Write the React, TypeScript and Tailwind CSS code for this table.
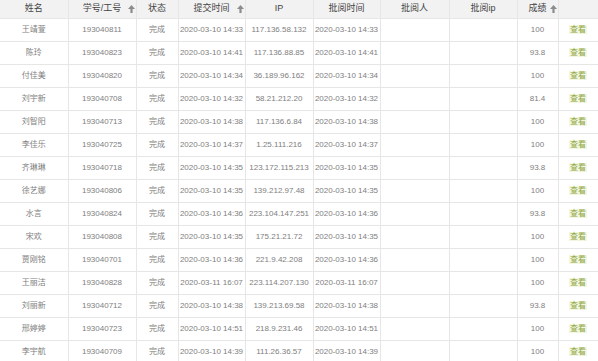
const rows = [
  ["王靖萱", "193040811", "2020-03-10 14:33", "117.136.58.132", "100"],
  ["陈玲", "193040823", "2020-03-10 14:41", "117.136.88.85", "93.8"],
  ["付佳美", "193040820", "2020-03-10 14:34", "36.189.96.162", "100"],
  ["刘宇新", "193040708", "2020-03-10 14:32", "58.21.212.20", "81.4"],
  ["刘智阳", "193040713", "2020-03-10 14:38", "117.136.6.84", "100"],
  ["李佳乐", "193040725", "2020-03-10 14:37", "1.25.111.216", "100"],
  ["齐琳琳", "193040718", "2020-03-10 14:35", "123.172.115.213", "93.8"],
  ["徐艺娜", "193040806", "2020-03-10 14:35", "139.212.97.48", "100"],
  ["水言", "193040824", "2020-03-10 14:36", "223.104.147.251", "93.8"],
  ["宋欢", "193040808", "2020-03-10 14:35", "175.21.21.72", "100"],
  ["贾刚铭", "193040701", "2020-03-10 14:36", "221.9.42.208", "100"],
  ["王丽洁", "193040828", "2020-03-11 16:07", "223.114.207.130", "100"],
  ["刘丽新", "193040712", "2020-03-10 14:38", "139.213.69.58", "93.8"],
  ["邢婷婷", "193040723", "2020-03-10 14:51", "218.9.231.46", "100"],
  ["李宇航", "193040709", "2020-03-10 14:39", "111.26.36.57", "100"],
];

// small up arrow next to sortable headers
const SortArrow = () => (
  <svg width="7" height="8" viewBox="0 0 7 8" className="absolute right-[1px] top-[5px]">
    <path d="M3.5 0 L7 4 H4.6 V8 H2.4 V4 H0 Z" fill="#8c8c8c" />
  </svg>
);

const cols = [
  { label: "姓名", w: "w-[68px]" },
  { label: "学号/工号", w: "w-[68px]", sort: true },
  { label: "状态", w: "w-[42px]" },
  { label: "提交时间", w: "w-[67px]", sort: true },
  { label: "IP", w: "w-[68px]" },
  { label: "批阅时间", w: "w-[67px]" },
  { label: "批阅人", w: "w-[69px]" },
  { label: "批阅ip", w: "w-[68px]" },
  { label: "成绩", w: "w-[41px]", sort: true },
  { label: "", w: "w-[40px]" },
];

const cell = "border-r border-b border-[#e6e6e6] text-center px-0 whitespace-nowrap overflow-hidden";

export default function App() {
  return (
    <div
      className="w-[598px] h-[361px] overflow-hidden bg-white"
      style={{ fontFamily: '"Liberation Sans", "Noto Sans CJK SC", sans-serif' }}
    >
      <table className="table-fixed border-collapse w-[598px]">
        <thead>
          <tr className="h-[18px] bg-[#f2f2f2]">
            {cols.map((c, i) => (
              <th
                key={i}
                className={`${c.w} ${cell} relative text-[9px] font-normal text-[#444]`}
              >
                {c.label}
                {c.sort && <SortArrow />}
              </th>
            ))}
          </tr>
        </thead>
        <tbody className="text-[8px] text-[#808080]">
          {rows.map((r) => (
            <tr key={r[1]} className="h-[23px]">
              <td className={cell}>{r[0]}</td>
              <td className={cell}>{r[1]}</td>
              <td className={cell}>完成</td>
              <td className={cell}>{r[2]}</td>
              <td className={cell}>{r[3]}</td>
              <td className={cell}>{r[2]}</td>
              <td className={cell}></td>
              <td className={cell}></td>
              <td className={cell}>{r[4]}</td>
              <td className={cell}>
                <span className="text-[#8fa845] bg-[#f3f6e1] px-[1px]">查看</span>
              </td>
            </tr>
          ))}
        </tbody>
      </table>
    </div>
  );
}
